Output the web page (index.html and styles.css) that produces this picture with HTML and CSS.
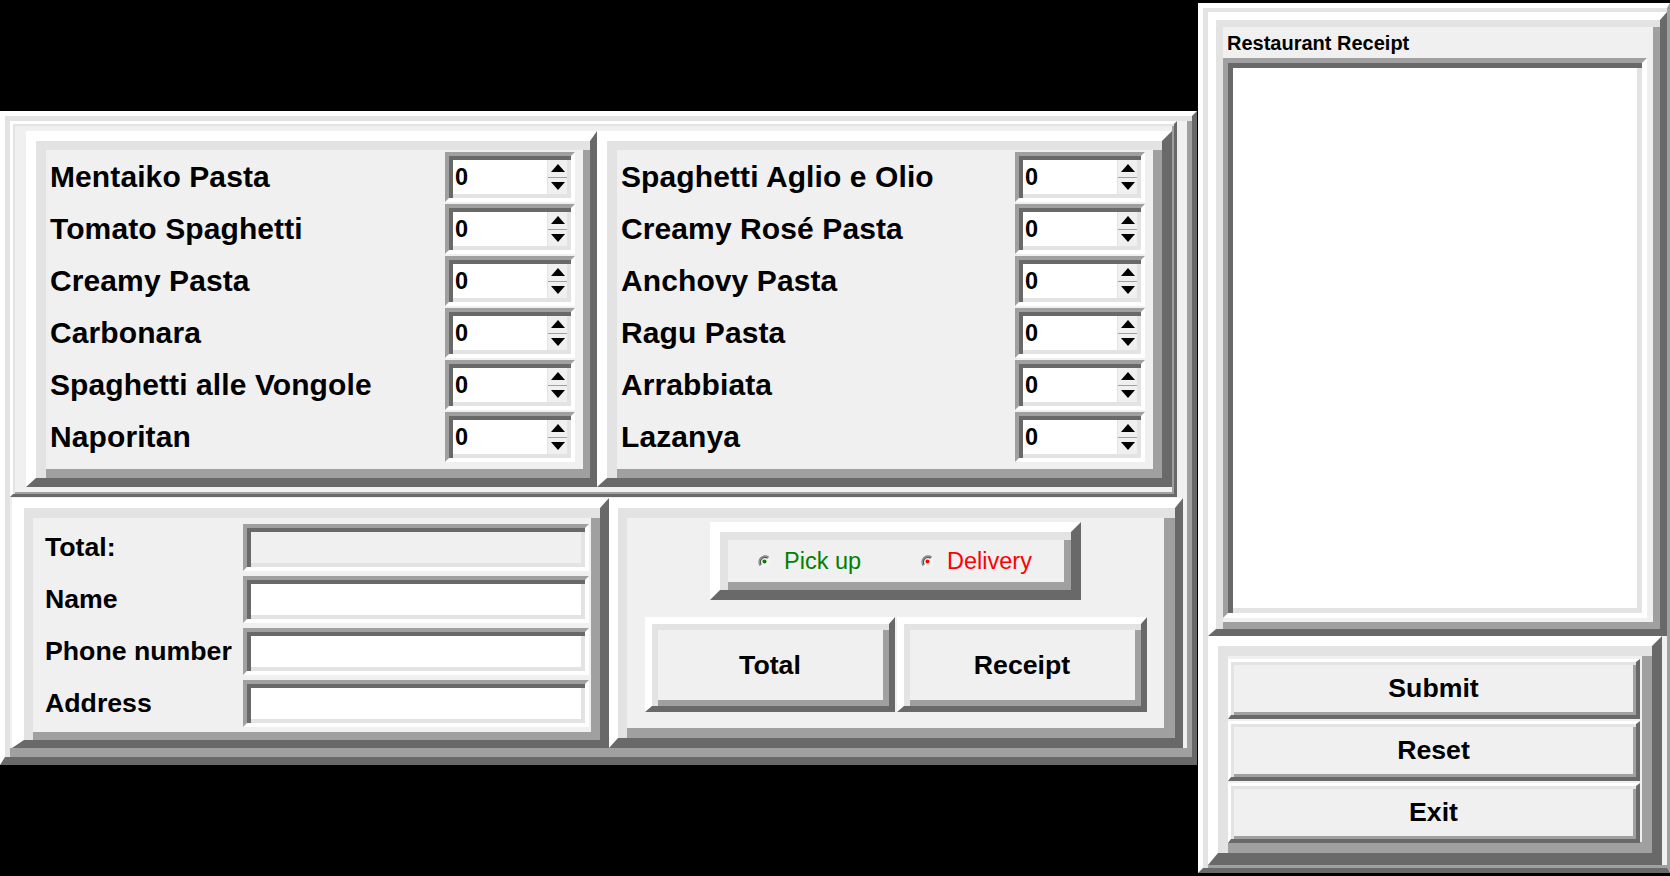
FILE: index.html
```html
<!DOCTYPE html>
<html>
<head>
<meta charset="utf-8">
<title>Restaurant</title>
<link rel="stylesheet" href="styles.css">
</head>
<body>
<div class="app">
  <div class="main">
    <div class="topsec">
      <div class="menu m1">
        <div class="row"><span class="lbl">Mentaiko Pasta</span><div class="spin"><span class="val">0</span><span class="arr"><i class="up"></i><i class="dn"></i></span></div></div>
        <div class="row"><span class="lbl">Tomato Spaghetti</span><div class="spin"><span class="val">0</span><span class="arr"><i class="up"></i><i class="dn"></i></span></div></div>
        <div class="row"><span class="lbl">Creamy Pasta</span><div class="spin"><span class="val">0</span><span class="arr"><i class="up"></i><i class="dn"></i></span></div></div>
        <div class="row"><span class="lbl">Carbonara</span><div class="spin"><span class="val">0</span><span class="arr"><i class="up"></i><i class="dn"></i></span></div></div>
        <div class="row"><span class="lbl">Spaghetti alle Vongole</span><div class="spin"><span class="val">0</span><span class="arr"><i class="up"></i><i class="dn"></i></span></div></div>
        <div class="row"><span class="lbl">Naporitan</span><div class="spin"><span class="val">0</span><span class="arr"><i class="up"></i><i class="dn"></i></span></div></div>
      </div>
      <div class="menu m2">
        <div class="row"><span class="lbl">Spaghetti Aglio e Olio</span><div class="spin"><span class="val">0</span><span class="arr"><i class="up"></i><i class="dn"></i></span></div></div>
        <div class="row"><span class="lbl">Creamy Rosé Pasta</span><div class="spin"><span class="val">0</span><span class="arr"><i class="up"></i><i class="dn"></i></span></div></div>
        <div class="row"><span class="lbl">Anchovy Pasta</span><div class="spin"><span class="val">0</span><span class="arr"><i class="up"></i><i class="dn"></i></span></div></div>
        <div class="row"><span class="lbl">Ragu Pasta</span><div class="spin"><span class="val">0</span><span class="arr"><i class="up"></i><i class="dn"></i></span></div></div>
        <div class="row"><span class="lbl">Arrabbiata</span><div class="spin"><span class="val">0</span><span class="arr"><i class="up"></i><i class="dn"></i></span></div></div>
        <div class="row"><span class="lbl">Lazanya</span><div class="spin"><span class="val">0</span><span class="arr"><i class="up"></i><i class="dn"></i></span></div></div>
      </div>
    </div>
    <div class="botsec">
      <div class="cust">
        <div class="frow"><span class="flbl">Total:</span><div class="entry ro"></div></div>
        <div class="frow"><span class="flbl">Name</span><div class="entry"></div></div>
        <div class="frow"><span class="flbl">Phone number</span><div class="entry"></div></div>
        <div class="frow"><span class="flbl">Address</span><div class="entry"></div></div>
      </div>
      <div class="actions">
        <div class="radiobox">
          <span class="radio pick"><svg class="rdot" width="13" height="13" viewBox="0 0 13 13"><circle cx="6.5" cy="6.5" r="6" fill="#f4f4f4"/><path d="M2.3 10.7 A6 6 0 0 1 10.7 2.3" stroke="#8a8a8a" stroke-width="1.5" fill="none"/><path d="M3.3 9.7 A4.6 4.6 0 0 1 9.7 3.3" stroke="#555555" stroke-width="1.2" fill="none"/><circle cx="6.5" cy="6.5" r="2" fill="#008000"/></svg>Pick up</span>
          <span class="radio deliv"><svg class="rdot" width="13" height="13" viewBox="0 0 13 13"><circle cx="6.5" cy="6.5" r="6" fill="#f4f4f4"/><path d="M2.3 10.7 A6 6 0 0 1 10.7 2.3" stroke="#8a8a8a" stroke-width="1.5" fill="none"/><path d="M3.3 9.7 A4.6 4.6 0 0 1 9.7 3.3" stroke="#555555" stroke-width="1.2" fill="none"/><circle cx="6.5" cy="6.5" r="2" fill="#ff0000"/></svg>Delivery</span>
        </div>
        <div class="btnrow">
          <div class="bigbtn">Total</div>
          <div class="bigbtn">Receipt</div>
        </div>
      </div>
    </div>
  </div>
  <div class="side">
    <div class="receipt">
      <div class="rtitle">Restaurant Receipt</div>
      <div class="rtext"></div>
    </div>
    <div class="cmds">
      <div class="cbtn">Submit</div>
      <div class="cbtn">Reset</div>
      <div class="cbtn">Exit</div>
    </div>
  </div>
</div>
</body>
</html>
```

FILE: styles.css
```css
* { box-sizing: border-box; margin: 0; padding: 0; }
html, body { width: 1670px; height: 876px; overflow: hidden; background: #000; }
body { font-family: "Liberation Sans", Arial, sans-serif; color: #000; }

.app { display: flex; align-items: flex-start; }

/* main left frame */
.main {
  margin-top: 111px;
  width: 1197px; height: 654px;
  background: #f0f0f0;
  border-style: solid;
  border-width: 5px 5px 8px 5px;
  border-color: #ffffff #696969 #696969 #ffffff;
  box-shadow: inset 5px 5px 0 #e3e3e3, inset -5px -9px 0 #a0a0a0;
  padding: 5px 5px 9px 5px;
  display: flex; flex-direction: column;
}

.topsec {
  width: 1167px; height: 376px;
  border-style: solid; border-width: 3px;
  border-color: #ffffff #696969 #696969 #ffffff;
  box-shadow: inset 2px 2px 0 #e3e3e3, inset -2px -2px 0 #a0a0a0;
  padding: 7px 2px 2px 13px;
  display: flex; align-items: flex-start;
}

.menu {
  height: 356px;
  border-style: solid;
  border-color: #ffffff #696969 #696969 #ffffff;
  display: flex; flex-direction: column;
}
.m1 {
  width: 571px;
  border-width: 10px 7px 9px 10px;
  box-shadow: inset 10px 9px 0 #e3e3e3, inset -7px -9px 0 #a0a0a0;
  padding: 11px 15px 14px 10px;
}
.m2 {
  width: 575px;
  border-width: 10px 10px 9px 10px;
  box-shadow: inset 10px 9px 0 #e3e3e3, inset -9px -9px 0 #a0a0a0;
  padding: 11px 17px 14px 10px;
}
.row { height: 52px; display: flex; align-items: flex-start; }
.lbl {
  flex: 1; height: 50px; line-height: 50px;
  padding-left: 4px;
  font-weight: bold; font-size: 30px; letter-spacing: 0.1px; white-space: nowrap;
}

.spin {
  width: 130px; height: 50px;
  background: #ffffff;
  border: 4px solid; border-color: #a0a0a0 #ffffff #ffffff #a0a0a0;
  box-shadow: inset 4px 4px 0 #696969, inset -4px -4px 0 #e3e3e3;
  padding: 4px;
  display: flex;
}
.val { flex: 1; font-weight: bold; font-size: 23.5px; line-height: 34px; padding-left: 2px; }
.arr { width: 20px; display: flex; flex-direction: column; background: #f0f0f0; border-left: 1px solid #e3e3e3; }
.arr i { flex: 1; display: flex; align-items: center; justify-content: center; }
.arr .up { border-bottom: 1px solid #a0a0a0; }
.arr .up::after {
  content: ""; width: 0; height: 0;
  border-left: 7px solid transparent; border-right: 7px solid transparent;
  border-bottom: 8px solid #000;
}
.arr .dn::after {
  content: ""; width: 0; height: 0;
  border-left: 7px solid transparent; border-right: 7px solid transparent;
  border-top: 8px solid #000;
}

/* bottom section */
.botsec { height: 251px; display: flex; align-items: flex-start; padding: 1px 0 0 2px; }

.cust {
  width: 597px; height: 250px;
  border-style: solid;
  border-width: 10px 9px 8px 12px;
  border-color: #ffffff #696969 #696969 #ffffff;
  box-shadow: inset 9px 10px 0 #e3e3e3, inset -9px -8px 0 #a0a0a0;
  padding: 16px 9px 8px 9px;
}
.frow { height: 52px; display: flex; align-items: flex-start; }
.flbl {
  width: 210px; height: 47px; line-height: 47px;
  padding-left: 12px;
  font-weight: bold; font-size: 26.7px; white-space: nowrap;
}
.entry {
  width: 346px; height: 47px;
  background: #ffffff;
  border: 4px solid; border-color: #a0a0a0 #ffffff #ffffff #a0a0a0;
  box-shadow: inset 4px 4px 0 #696969, inset -4px -4px 0 #e3e3e3;
}
.entry.ro { background: #f0f0f0; }

.actions {
  width: 574px; height: 250px;
  border-style: solid;
  border-width: 10px 8px 10px 9px;
  border-color: #ffffff #696969 #696969 #ffffff;
  box-shadow: inset 9px 10px 0 #e3e3e3, inset -11px -10px 0 #a0a0a0;
  padding: 14px 11px 10px 9px;
  display: flex; flex-direction: column; align-items: center;
}
.radiobox {
  width: 371px; height: 78px;
  border-style: solid;
  border-width: 10px 10px 10px 10px;
  border-color: #ffffff #696969 #696969 #ffffff;
  box-shadow: inset 8px 8px 0 #e3e3e3, inset -7px -8px 0 #a0a0a0;
  padding: 8px 7px 8px 8px;
  display: flex; align-items: center;
  padding-left: 38px;
}
.radio { display: flex; align-items: center; font-size: 23.5px; white-space: nowrap; }
.rdot { margin-right: 13px; flex: none; }
.pick { color: #008000; width: 163px; }
.deliv { color: #ff0000; }

.btnrow { margin-top: 17px; display: flex; gap: 2px; }
.bigbtn {
  width: 250px; height: 95px;
  border-style: solid; border-width: 7px 6px 6px 7px;
  border-color: #ffffff #696969 #696969 #ffffff;
  box-shadow: inset 6px 6px 0 #e3e3e3, inset -6px -6px 0 #a0a0a0;
  background: #f0f0f0;
  display: flex; align-items: center; justify-content: center;
  font-weight: bold; font-size: 26.7px;
}

/* right side */
.side {
  margin-left: 1px; margin-top: 3px;
  width: 472px; height: 870px;
  background: #f0f0f0;
  border-style: solid;
  border-width: 5px 3px 5px 5px;
  border-color: #ffffff #a0a0a0 #696969 #ffffff;
  box-shadow: inset 5px 4px 0 #e3e3e3, inset 0 -3px 0 #a0a0a0;
  padding: 4px 0 3px 5px;
  display: flex; flex-direction: column; align-items: flex-start;
}
.receipt {
  width: 459px; height: 624px;
  border-style: solid; border-width: 8px 7px 7px 8px;
  border-color: #ffffff #696969 #696969 #ffffff;
  box-shadow: inset 7px 7px 0 #e3e3e3, inset -7px -7px 0 #a0a0a0;
  padding: 7px 7px 7px 7px;
  display: flex; flex-direction: column;
}
.rtitle { height: 31px; line-height: 32px; padding-left: 4px; font-weight: bold; font-size: 20px; white-space: nowrap; }
.rtext {
  width: 424px; height: 560px;
  background: #ffffff;
  border: 5px solid; border-color: #a0a0a0 #ffffff #ffffff #a0a0a0;
  box-shadow: inset 5px 5px 0 #696969, inset -5px -5px 0 #e3e3e3;
}
.cmds {
  width: 454px; height: 229px;
  border-style: solid; border-width: 10px 10px 12px 10px;
  border-color: #ffffff #696969 #696969 #ffffff;
  box-shadow: inset 10px 10px 0 #e3e3e3, inset -10px -11px 0 #a0a0a0;
  padding: 13px 12px 10px 10px;
  display: flex; flex-direction: column; gap: 2px;
}
.cbtn {
  height: 60px;
  border-style: solid; border-width: 3px 4px 4px 3px;
  border-color: #ffffff #696969 #696969 #ffffff;
  box-shadow: inset 3px 3px 0 #e3e3e3, inset -3px -3px 0 #a0a0a0;
  background: #f0f0f0;
  display: flex; align-items: center; justify-content: center;
  font-weight: bold; font-size: 26.7px;
}
```
